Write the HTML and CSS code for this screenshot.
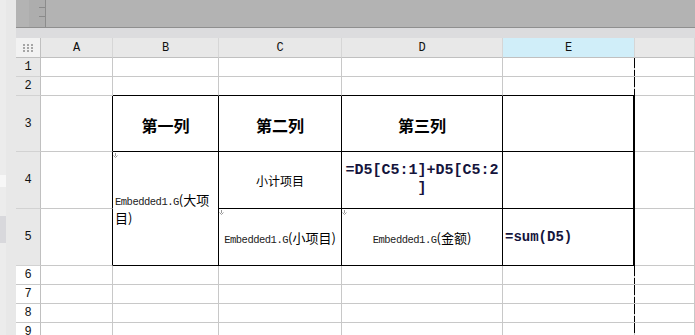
FILE: index.html
```html
<!DOCTYPE html>
<html lang="zh-CN">
<head>
  <meta charset="UTF-8" />
  <title>报表设计</title>
  <link rel="stylesheet" href="styles.css">
</head>
<body>
  <div class="side">
    <div class="side-edge">
      <div class="patch p1"></div>
      <div class="patch p2"></div>
      <div class="patch p3"></div>
      <div class="patch p4"></div>
    </div>
  </div>

  <div class="main">
    <div class="toolbar">
      <div class="ruler"><span class="tick"></span><span class="tick"></span></div>
    </div>
    <div class="band"></div>

    <table class="sheet">
      <colgroup>
        <col class="c-hd"><col class="c-a"><col class="c-b"><col class="c-c"><col class="c-d"><col class="c-e"><col>
      </colgroup>
      <tr class="head">
        <td class="corner">
          <svg width="10" height="8" viewBox="0 0 10 8">
            <g fill="#a6a6a6">
              <rect x="0" y="0" width="2" height="2"/><rect x="4" y="0" width="2" height="2"/><rect x="8" y="0" width="2" height="2"/>
              <rect x="0" y="3" width="2" height="2"/><rect x="4" y="3" width="2" height="2"/><rect x="8" y="3" width="2" height="2"/>
              <rect x="0" y="6" width="2" height="2"/><rect x="4" y="6" width="2" height="2"/><rect x="8" y="6" width="2" height="2"/>
            </g>
          </svg>
        </td>
        <td class="col">A</td>
        <td class="col">B</td>
        <td class="col">C</td>
        <td class="col">D</td>
        <td class="col sel">E</td>
        <td class="col"></td>
      </tr>
      <tr class="sm">
        <td class="rn">1</td><td></td><td></td><td></td><td></td><td class="page"></td><td></td>
      </tr>
      <tr class="sm">
        <td class="rn">2</td><td></td><td class="bb"></td><td class="bb"></td><td class="bb"></td><td class="bb page"></td><td></td>
      </tr>
      <tr class="r3">
        <td class="rn">3</td>
        <td class="br"></td>
        <td class="box title">第一列</td>
        <td class="box title">第二列</td>
        <td class="box title">第三列</td>
        <td class="box last"></td>
        <td></td>
      </tr>
      <tr class="r45">
        <td class="rn">4</td>
        <td class="br"></td>
        <td class="box left" rowspan="2">
          <span class="mark"><svg width="5" height="5" viewBox="0 0 5 5"><path d="M2.5 0v3M0.5 2.5l2 2 2-2" stroke="#9a9a9a" fill="none"/></svg></span>
          <span class="lat">Embedded1.G</span>(大项目)
        </td>
        <td class="box sub">小计项目</td>
        <td class="box formula">=D5[C5:1]+D5[C5:2<br>]</td>
        <td class="box last"></td>
        <td></td>
      </tr>
      <tr class="r45">
        <td class="rn">5</td>
        <td class="br"></td>
        <td class="box field">
          <span class="mark"><svg width="5" height="5" viewBox="0 0 5 5"><path d="M2.5 0v3M0.5 2.5l2 2 2-2" stroke="#9a9a9a" fill="none"/></svg></span>
          <span class="lat">Embedded1.G</span>(小项目)
        </td>
        <td class="box field">
          <span class="mark"><svg width="5" height="5" viewBox="0 0 5 5"><path d="M2.5 0v3M0.5 2.5l2 2 2-2" stroke="#9a9a9a" fill="none"/></svg></span>
          <span class="lat">Embedded1.G</span>(金额)
        </td>
        <td class="box last sum">=sum(D5)</td>
        <td></td>
      </tr>
      <tr class="sm">
        <td class="rn plain">6</td><td></td><td></td><td></td><td></td><td class="page"></td><td></td>
      </tr>
      <tr class="sm">
        <td class="rn plain">7</td><td></td><td></td><td></td><td></td><td class="page"></td><td></td>
      </tr>
      <tr class="sm">
        <td class="rn plain">8</td><td></td><td></td><td></td><td></td><td class="page"></td><td></td>
      </tr>
      <tr class="sm">
        <td class="rn plain">9</td><td></td><td></td><td></td><td></td><td class="page"></td><td></td>
      </tr>
    </table>
  </div>
</body>
</html>
```

FILE: styles.css
```css
body {
  margin: 0;
  width: 695px;
  height: 335px;
  overflow: hidden;
  display: flex;
  background-color: #fff;
  font-family: "Noto Sans CJK SC", sans-serif;
}

/* left strip */
.side {
  width: 16px;
  flex: none;
  display: flex;
  background-color: #e8e8e8;
}
.side-edge {
  width: 6px;
  display: flex;
  flex-direction: column;
  background-color: #ececec;
}
.patch { flex: none; }
.p1 { height: 175px; }
.p2 { height: 12px; background-color: #f7f7f7; }
.p3 { height: 29px; background-color: #ececec; }
.p4 { height: 27px; background-color: #d8d8dc; }

.main {
  flex: 1;
  display: flex;
  flex-direction: column;
  min-width: 0;
}
.toolbar {
  height: 27px;
  flex: none;
  background-color: #b3b3b3;
  border-bottom: 1px solid #8f8f8f;
  padding-left: 13px;
}
.ruler {
  width: 17px;
  height: 27px;
  background-color: #adadad;
  border-right: 1px solid #8c8c8c;
  display: flex;
  flex-direction: column;
  align-items: flex-end;
  gap: 8px;
  padding-top: 7px;
  box-sizing: border-box;
}
.tick {
  width: 6px;
  height: 1px;
  background-color: #8a8a8a;
}
.band {
  height: 10px;
  flex: none;
  background-color: #dcdcde;
}

/* grid */
.sheet {
  border-collapse: separate;
  border-spacing: 0;
  table-layout: fixed;
  width: 679px;
}
.c-hd { width: 25px; }
.c-a { width: 72px; }
.c-b { width: 106px; }
.c-c { width: 123px; }
.c-d { width: 161px; }
.c-e { width: 132px; }

.sheet td {
  padding: 0;
  border-right: 1px solid #c8c8c8;
  border-bottom: 1px solid #c8c8c8;
  position: relative;
  font-size: 12px;
  color: #000;
}
tr.head { height: 20px; }
tr.sm { height: 19px; }
tr.r3 { height: 56px; }
tr.r45 { height: 57px; }

.head td {
  background-color: #e8e8e8;
  border-right-color: #d6d6d6;
  border-bottom-color: #c0c0c0;
  text-align: center;
  font-family: "Liberation Mono", monospace;
  font-size: 12px;
  color: #111;
}
.head td.sel { background-color: #d0eef9; }
.head td.corner {
  background-color: #f2f2f2;
  border-right-color: #c0c0c0;
  line-height: 0;
}
.sheet td.rn {
  background-color: #e8e8e8;
  border-right-color: #c0c0c0;
  border-bottom-color: #d2d2d2;
  text-align: center;
  font-family: "Liberation Mono", monospace;
  font-size: 12px;
  color: #111;
}
.sheet td.rn.plain {
  background-color: #fff;
  border-bottom-color: #c8c8c8;
}

.sheet td.bb { border-bottom-color: #000; }
.sheet td.br { border-right-color: #000; }
.sheet td.box {
  border-right-color: #000;
  border-bottom-color: #000;
}
.sheet td.last { border-right: 2px solid #000; }
.sheet td.page {
  border-right: none;
  background: repeating-linear-gradient(to bottom, #000 0 10px, #c8c8c8 10px 12px) right top / 1px 100% no-repeat;
}

.sheet td.title {
  text-align: center;
  font-size: 16px;
  font-weight: bold;
  padding-top: 2px;
}
.sheet td.sub {
  text-align: center;
  font-size: 12px;
}
.sheet td.left {
  text-align: left;
  font-size: 13px;
  line-height: 15px;
  padding-left: 2px;
}
.sheet td.field {
  text-align: center;
  font-size: 13px;
}
.lat {
  font-family: "Liberation Mono", monospace;
  font-size: 10.5px;
  letter-spacing: -0.5px;
  color: #222;
}
.sheet td.formula {
  text-align: center;
  font-family: "Liberation Mono", monospace;
  font-weight: bold;
  font-size: 15px;
  line-height: 18px;
  color: #14143c;
  white-space: nowrap;
}
.sheet td.sum {
  padding-left: 2px;
  font-family: "Liberation Mono", monospace;
  font-weight: bold;
  font-size: 14px;
  color: #14143c;
}
.mark {
  position: absolute;
  left: 0;
  top: 1px;
  line-height: 0;
}
```
